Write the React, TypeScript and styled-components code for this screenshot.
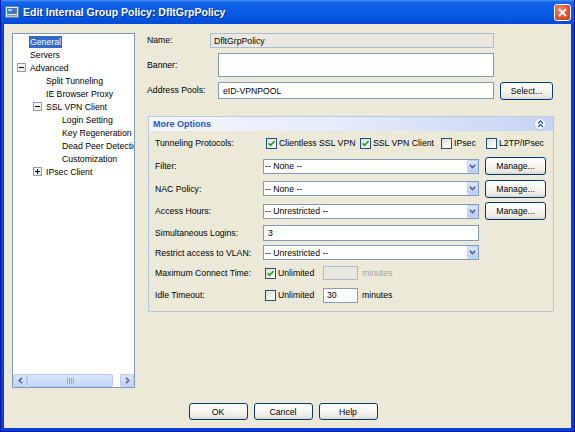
import React from "react";
import styled, { createGlobalStyle } from "styled-components";

const Global = createGlobalStyle`
  html, body { margin: 0; padding: 0; background: #fff; }
  body { font-family: "Liberation Sans", Arial, sans-serif; font-size: 8.7px; color: #000; }
  #root { width: 575px; height: 432px; }
  * { box-sizing: border-box; }
`;

const Window = styled.div`
  width: 575px;
  height: 432px;
  display: flex;
  flex-direction: column;
  background: #0840d6;
  border: 1px solid #0019a8;
  border-top: none;
  overflow: hidden;
`;

const TitleBar = styled.div`
  height: 24px;
  flex: 0 0 24px;
  display: flex;
  align-items: center;
  padding: 0 3px 0 4px;
  background: linear-gradient(to bottom, #4a93f5 0%, #1768ea 8%, #0a5de4 30%, #0758e2 70%, #0448d6 100%);
`;

const TitleText = styled.div`
  flex: 1;
  margin-left: 4px;
  color: #fff;
  font-weight: bold;
  font-size: 10.5px;
  white-space: nowrap;
  text-shadow: 1px 1px 0 #0a2a8a;
`;

const CloseButton = styled.div`
  width: 17px;
  height: 17px;
  border: 1px solid #fff;
  border-radius: 3px;
  background: radial-gradient(circle at 35% 30%, #f08a6c 0%, #de5532 55%, #c23a18 100%);
  display: flex;
  align-items: center;
  justify-content: center;
`;

const Content = styled.div`
  flex: 1;
  margin: 0 3px 3px 3px;
  background: #ece9d8;
  display: flex;
  flex-direction: column;
  padding: 9px 17px 0 8px;
`;

const Main = styled.div`
  display: flex;
  height: 355px;
  gap: 12px;
`;

const Tree = styled.div`
  width: 123px;
  height: 355px;
  background: #fff;
  border: 1px solid #7f9db9;
  display: flex;
  flex-direction: column;
  overflow: hidden;
`;

const TreeBody = styled.div`
  flex: 1;
  padding-top: 1px;
  overflow: hidden;
`;

const TreeRow = styled.div<{ $level: number }>`
  height: 13px;
  display: flex;
  align-items: center;
  padding-left: ${(p) => 4 + p.$level * 16}px;
  white-space: nowrap;
`;

const ExpSlot = styled.div`
  width: 13px;
  flex: 0 0 13px;
  display: flex;
  align-items: center;
`;

const ExpBox = styled.div<{ $open: boolean }>`
  width: 9px;
  height: 9px;
  border: 1px solid #8a9fb8;
  background: linear-gradient(135deg, #fff 0%, #e4e2da 100%);
  position: relative;
  &::before {
    content: "";
    position: absolute;
    left: 1px;
    top: 3px;
    width: 5px;
    height: 1px;
    background: #000;
  }
  &::after {
    content: "";
    display: ${(p) => (p.$open ? "none" : "block")};
    position: absolute;
    left: 3px;
    top: 1px;
    width: 1px;
    height: 5px;
    background: #000;
  }
`;

const TreeLabel = styled.span<{ $sel?: boolean }>`
  line-height: 12px;
  padding: 0 1px;
  margin-left: -1px;
  background: ${(p) => (p.$sel ? "#316ac5" : "transparent")};
  color: ${(p) => (p.$sel ? "#fff" : "#000")};
`;

const HScroll = styled.div`
  height: 13px;
  flex: 0 0 13px;
  display: flex;
  background: #fbfbf8;
`;

const ScrollBtn = styled.div`
  width: 14px;
  height: 13px;
  border: 1px solid #b9c9ef;
  border-radius: 2px;
  background: linear-gradient(to bottom, #d9e4fd 0%, #c3d4fb 100%);
  display: flex;
  align-items: center;
  justify-content: center;
`;

const Thumb = styled.div`
  width: 86px;
  height: 13px;
  border: 1px solid #b5c7f2;
  border-radius: 2px;
  background: linear-gradient(to bottom, #dbe5fd 0%, #c6d5fb 100%);
  display: flex;
  align-items: center;
  justify-content: center;
  gap: 1px;
`;

const Grip = styled.div`
  width: 1px;
  height: 6px;
  background: #8ea6e3;
`;

const Track = styled.div`
  flex: 1;
`;

const Form = styled.div`
  flex: 1;
  display: flex;
  flex-direction: column;
`;

const FieldRow = styled.div<{ $h: number; $mt?: number }>`
  display: flex;
  align-items: flex-start;
  height: ${(p) => p.$h}px;
  margin-top: ${(p) => p.$mt ?? 0}px;
`;

const Label = styled.div<{ $w: number; $h: number }>`
  width: ${(p) => p.$w}px;
  flex: 0 0 ${(p) => p.$w}px;
  line-height: ${(p) => p.$h}px;
  white-space: nowrap;
`;

const TextBox = styled.div<{ $w: number; $h: number; $disabled?: boolean; $pl?: number }>`
  width: ${(p) => p.$w}px;
  height: ${(p) => p.$h}px;
  border: 1px solid ${(p) => (p.$disabled ? "#a9bdd3" : "#7f9db9")};
  background: ${(p) => (p.$disabled ? "#ebe9df" : "#fff")};
  padding-left: ${(p) => p.$pl ?? 3}px;
  display: flex;
  align-items: center;
  white-space: nowrap;
  overflow: hidden;
`;

const XPButton = styled.div<{ $w: number; $h: number; $ml?: number }>`
  width: ${(p) => p.$w}px;
  height: ${(p) => p.$h}px;
  margin-left: ${(p) => p.$ml ?? 0}px;
  border: 1px solid #003c74;
  border-radius: 3px;
  background: linear-gradient(to bottom, #ffffff 0%, #f7f6f1 45%, #ebe9e0 85%, #d8d3c6 100%);
  display: flex;
  align-items: center;
  justify-content: center;
  white-space: nowrap;
`;

const Panel = styled.div`
  margin-top: 16px;
  margin-left: 1px;
  width: 406px;
  height: 196px;
  border: 1px solid #b3cce4;
  display: flex;
  flex-direction: column;
`;

const PanelHeader = styled.div`
  height: 14px;
  flex: 0 0 14px;
  display: flex;
  align-items: center;
  padding: 0 7px 0 4px;
  background: linear-gradient(to right, #f4f6fc 0%, #e6ecfa 45%, #c5d4f5 100%);
`;

const PanelTitle = styled.div`
  flex: 1;
  font-weight: bold;
  font-size: 9px;
  color: #2157c6;
`;

const CollapseIcon = styled.div`
  width: 12px;
  height: 12px;
  border-radius: 50%;
  background: #fff;
  border: 1px solid #b7c8ea;
  display: flex;
  align-items: center;
  justify-content: center;
`;

const PanelRow = styled.div<{ $h: number }>`
  height: ${(p) => p.$h}px;
  flex: 0 0 ${(p) => p.$h}px;
  display: flex;
  align-items: center;
  padding-left: 6px;
`;

const RowLabel = styled.div`
  width: 108px;
  flex: 0 0 108px;
  white-space: nowrap;
`;

const Select = styled.div`
  width: 216px;
  height: 15px;
  border: 1px solid #7f9db9;
  background: #fff;
  display: flex;
  align-items: center;
  padding-left: 1px;
  white-space: nowrap;
`;

const SelectText = styled.div`
  flex: 1;
`;

const DropBtn = styled.div`
  width: 11px;
  height: 13px;
  margin-right: 0;
  border: 1px solid #c3d3fd;
  border-radius: 1px;
  background: linear-gradient(to bottom, #dbe6fe 0%, #b8cdfb 100%);
  display: flex;
  align-items: center;
  justify-content: center;
`;

const CheckItem = styled.div<{ $w?: number; $ml?: number }>`
  display: flex;
  align-items: center;
  width: ${(p) => (p.$w ? `${p.$w}px` : "auto")};
  flex: 0 0 auto;
  margin-left: ${(p) => p.$ml ?? 0}px;
  white-space: nowrap;
`;

const Box = styled.div`
  width: 11px;
  height: 11px;
  flex: 0 0 11px;
  border: 1px solid #1c5180;
  background: linear-gradient(135deg, #dcdcd6 0%, #f4f4f0 60%, #fff 100%);
  margin-right: 2px;
  display: flex;
  align-items: center;
  justify-content: center;
`;

const Unit = styled.span<{ $muted?: boolean }>`
  margin-left: 4px;
  color: ${(p) => (p.$muted ? "#a3a39a" : "#000")};
`;

const Footer = styled.div`
  margin-top: 15px;
  display: flex;
  justify-content: center;
  gap: 6px;
`;

const Check = ({ on }: { on: boolean }) => (
  <Box>
    {on && (
      <svg width="7" height="7" viewBox="0 0 7 7">
        <path d="M0.5 3.3 L2.6 5.4 L6.5 1" stroke="#21a121" strokeWidth="1.6" fill="none" />
      </svg>
    )}
  </Box>
);

const Arrow = () => (
  <svg width="7" height="5" viewBox="0 0 7 5">
    <path d="M0.8 0.8 L3.5 3.6 L6.2 0.8" stroke="#4d6185" strokeWidth="1.5" fill="none" />
  </svg>
);

const SelectBox = ({ value }: { value: string }) => (
  <Select>
    <SelectText>{value}</SelectText>
    <DropBtn>
      <Arrow />
    </DropBtn>
  </Select>
);

type Node = { label: string; level: number; exp?: "open" | "closed"; sel?: boolean };

const nodes: Node[] = [
  { label: "General", level: 0, sel: true },
  { label: "Servers", level: 0 },
  { label: "Advanced", level: 0, exp: "open" },
  { label: "Split Tunneling", level: 1 },
  { label: "IE Browser Proxy", level: 1 },
  { label: "SSL VPN Client", level: 1, exp: "open" },
  { label: "Login Setting", level: 2 },
  { label: "Key Regeneration", level: 2 },
  { label: "Dead Peer Detection", level: 2 },
  { label: "Customization", level: 2 },
  { label: "IPsec Client", level: 1, exp: "closed" },
];

const TitleIcon = () => (
  <svg width="14" height="14" viewBox="0 0 14 14">
    <rect x="0.5" y="1.5" width="13" height="11" rx="1" fill="#dfe6ee" stroke="#6b7f99" />
    <rect x="2" y="3" width="10" height="6" fill="#3b7bd0" />
    <rect x="3" y="4" width="4" height="2" fill="#9cd2f4" />
    <rect x="8" y="6" width="3" height="2" fill="#d33b2c" />
    <rect x="2" y="10" width="10" height="1.5" fill="#8a98aa" />
  </svg>
);

export default function App() {
  return (
    <>
      <Global />
      <Window>
        <TitleBar>
          <TitleIcon />
          <TitleText>Edit Internal Group Policy: DfltGrpPolicy</TitleText>
          <CloseButton>
            <svg width="9" height="9" viewBox="0 0 9 9">
              <path d="M1 1 L8 8 M8 1 L1 8" stroke="#fff" strokeWidth="1.8" />
            </svg>
          </CloseButton>
        </TitleBar>
        <Content>
          <Main>
            <Tree>
              <TreeBody>
                {nodes.map((n) => (
                  <TreeRow key={n.label} $level={n.level}>
                    <ExpSlot>{n.exp && <ExpBox $open={n.exp === "open"} />}</ExpSlot>
                    <TreeLabel $sel={n.sel}>{n.label}</TreeLabel>
                  </TreeRow>
                ))}
              </TreeBody>
              <HScroll>
                <ScrollBtn>
                  <svg width="5" height="7" viewBox="0 0 5 7">
                    <path d="M4 0.8 L1.2 3.5 L4 6.2" stroke="#4d6185" strokeWidth="1.5" fill="none" />
                  </svg>
                </ScrollBtn>
                <Thumb>
                  <Grip />
                  <Grip />
                  <Grip />
                  <Grip />
                </Thumb>
                <Track />
                <ScrollBtn>
                  <svg width="5" height="7" viewBox="0 0 5 7">
                    <path d="M1 0.8 L3.8 3.5 L1 6.2" stroke="#4d6185" strokeWidth="1.5" fill="none" />
                  </svg>
                </ScrollBtn>
              </HScroll>
            </Tree>
            <Form>
              <FieldRow $h={15}>
                <Label $w={63} $h={15}>Name:</Label>
                <TextBox $w={284} $h={15} $disabled>DfltGrpPolicy</TextBox>
              </FieldRow>
              <FieldRow $h={24} $mt={5}>
                <Label $w={71} $h={24}>Banner:</Label>
                <TextBox $w={276} $h={24} />
              </FieldRow>
              <FieldRow $h={18} $mt={5}>
                <Label $w={71} $h={17}>Address Pools:</Label>
                <TextBox $w={276} $h={17} $pl={4}>eID-VPNPOOL</TextBox>
                <XPButton $w={53} $h={18} $ml={6}>Select...</XPButton>
              </FieldRow>
              <Panel>
                <PanelHeader>
                  <PanelTitle>More Options</PanelTitle>
                  <CollapseIcon>
                    <svg width="7" height="8" viewBox="0 0 7 8">
                      <path d="M1 3.5 L3.5 1 L6 3.5 M1 7 L3.5 4.5 L6 7" stroke="#2a5cc4" strokeWidth="1.3" fill="none" />
                    </svg>
                  </CollapseIcon>
                </PanelHeader>
                <PanelRow $h={24}>
                  <RowLabel>Tunneling Protocols:</RowLabel>
                  <CheckItem $w={94} $ml={3}>
                    <Check on />
                    Clientless SSL VPN
                  </CheckItem>
                  <CheckItem $w={81}>
                    <Check on />
                    SSL VPN Client
                  </CheckItem>
                  <CheckItem $w={45}>
                    <Check on={false} />
                    IPsec
                  </CheckItem>
                  <CheckItem>
                    <Check on={false} />
                    L2TP/IPsec
                  </CheckItem>
                </PanelRow>
                <PanelRow $h={22}>
                  <RowLabel>Filter:</RowLabel>
                  <SelectBox value="-- None --" />
                  <XPButton $w={61} $h={18} $ml={6}>Manage...</XPButton>
                </PanelRow>
                <PanelRow $h={23}>
                  <RowLabel>NAC Policy:</RowLabel>
                  <SelectBox value="-- None --" />
                  <XPButton $w={61} $h={18} $ml={6}>Manage...</XPButton>
                </PanelRow>
                <PanelRow $h={22}>
                  <RowLabel>Access Hours:</RowLabel>
                  <SelectBox value="-- Unrestricted --" />
                  <XPButton $w={61} $h={18} $ml={6}>Manage...</XPButton>
                </PanelRow>
                <PanelRow $h={21}>
                  <RowLabel>Simultaneous Logins:</RowLabel>
                  <TextBox $w={216} $h={16} $pl={4}>3</TextBox>
                </PanelRow>
                <PanelRow $h={19}>
                  <RowLabel>Restrict access to VLAN:</RowLabel>
                  <SelectBox value="-- Unrestricted --" />
                </PanelRow>
                <PanelRow $h={22}>
                  <RowLabel>Maximum Connect Time:</RowLabel>
                  <CheckItem $w={58} $ml={2}>
                    <Check on />
                    Unlimited
                  </CheckItem>
                  <TextBox $w={35} $h={14} $disabled />
                  <Unit $muted>minutes</Unit>
                </PanelRow>
                <PanelRow $h={22}>
                  <RowLabel>Idle Timeout:</RowLabel>
                  <CheckItem $w={58} $ml={2}>
                    <Check on={false} />
                    Unlimited
                  </CheckItem>
                  <TextBox $w={35} $h={15}>30</TextBox>
                  <Unit>minutes</Unit>
                </PanelRow>
              </Panel>
            </Form>
          </Main>
          <Footer>
            <XPButton $w={59} $h={17}>OK</XPButton>
            <XPButton $w={59} $h={17}>Cancel</XPButton>
            <XPButton $w={59} $h={17}>Help</XPButton>
          </Footer>
        </Content>
      </Window>
    </>
  );
}
